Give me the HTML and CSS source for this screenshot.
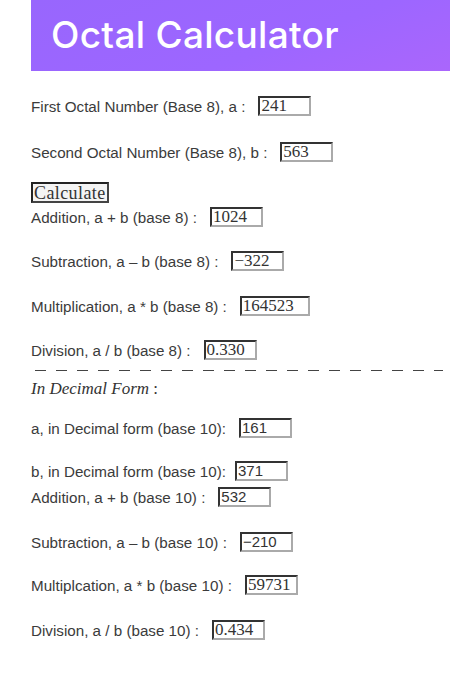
FILE: index.html
```html
<!DOCTYPE html>
<html>
<head>
<meta charset="utf-8">
<link rel="stylesheet" href="styles.css">
</head>
<body>
<header class="banner"><h1 class="title">Octal Calculator</h1></header>
<main class="calc">
  <div class="row r1"><span class="lbl">First Octal Number (Base 8), a :</span><span class="box">241</span></div>
  <div class="row r2"><span class="lbl">Second Octal Number (Base 8), b :</span><span class="box">563</span></div>
  <button class="btn">Calculate</button>
  <div class="row r3"><span class="lbl">Addition, a + b (base 8) :</span><span class="box">1024</span></div>
  <div class="row r4"><span class="lbl">Subtraction, a – b (base 8) :</span><span class="box">−322</span></div>
  <div class="row r4b"><span class="lbl">Multiplication, a * b (base 8) :</span><span class="box wide">164523</span></div>
  <div class="row r4"><span class="lbl">Division, a / b (base 8) :</span><span class="box">0.330</span></div>
  <div class="dashes"></div>
  <div class="heading"><em>In Decimal Form</em> :</div>
  <div class="row r5"><span class="lbl">a, in Decimal form (base 10):</span><span class="box sans">161</span></div>
  <div class="row r6"><span class="lbl tight">b, in Decimal form (base 10):</span><span class="box sans">371</span></div>
  <div class="row r7"><span class="lbl">Addition, a + b (base 10) :</span><span class="box sans">532</span></div>
  <div class="row r9"><span class="lbl">Subtraction, a – b (base 10) :</span><span class="box sans">−210</span></div>
  <div class="row r8"><span class="lbl">Multiplcation, a * b (base 10) :</span><span class="box">59731</span></div>
  <div class="row r4b"><span class="lbl">Division, a / b (base 10) :</span><span class="box">0.434</span></div>
</main>
</body>
</html>
```
FILE: styles.css
```css
html, body { margin: 0; padding: 0; background: #fff; }
body { width: 450px; height: 677px; overflow: hidden; font-family: "Liberation Sans", Arial, sans-serif; }
.banner {
  margin-left: 31px;
  height: 71px;
  background: linear-gradient(160deg, #9866fd 0%, #9d66ff 60%, #aa66fc 100%);
  display: flex;
  align-items: center;
  padding-left: 20px;
}
.title {
  margin: 0;
  font-family: "Inter", "Open Sans", sans-serif;
  font-weight: 500;
  font-size: 37px;
  color: #fff;
  letter-spacing: 0.3px;
  position: relative;
  top: -1px;
}
.calc { padding-left: 31px; display: flex; flex-direction: column; align-items: flex-start; }
.row { display: flex; align-items: center; height: 20px; font-size: 15.2px; color: #3b3b3b; }
.lbl { margin-right: 13px; white-space: pre; }
.lbl.tight { margin-right: 9px; }
.box {
  box-sizing: border-box;
  width: 53px; height: 20px;
  border: 2px solid;
  border-color: #333 #aaa #aaa #333;
  font-family: "Liberation Serif", serif;
  font-size: 17px;
  line-height: 16px;
  padding-left: 1px;
  color: #333;
  background: #fff;
}
.box.wide { width: 70px; }
.box.sans { font-family: "Liberation Sans", Arial, sans-serif; font-size: 15px; }
.r1 { margin-top: 25px; }
.r2 { margin-top: 26px; }
.btn {
  margin-top: 20px;
  font-family: "Liberation Serif", serif;
  font-size: 18px;
  letter-spacing: 0.4px;
  color: #333;
  background: #f4f4f4;
  border: 2px solid;
  border-color: #222 #444 #444 #222;
  padding: 0 1px;
  height: 21px;
  line-height: 16px;
}
.r3 { margin-top: 4px; }
.r4 { margin-top: 24px; }
.r4b { margin-top: 25px; }
.dashes {
  margin-top: 10px;
  margin-left: 4px;
  width: 408px;
  height: 1px;
  background: repeating-linear-gradient(90deg, #444 0 11px, transparent 11px 21px);
}
.heading {
  margin-top: 8px;
  font-family: "Liberation Serif", serif;
  font-size: 17px;
  color: #333;
  height: 20px;
  line-height: 20px;
}
.r5 { margin-top: 19px; }
.r6 { margin-top: 23px; }
.r7 { margin-top: 6px; }
.r9 { margin-top: 25px; }
.r8 { margin-top: 23px; }
```
